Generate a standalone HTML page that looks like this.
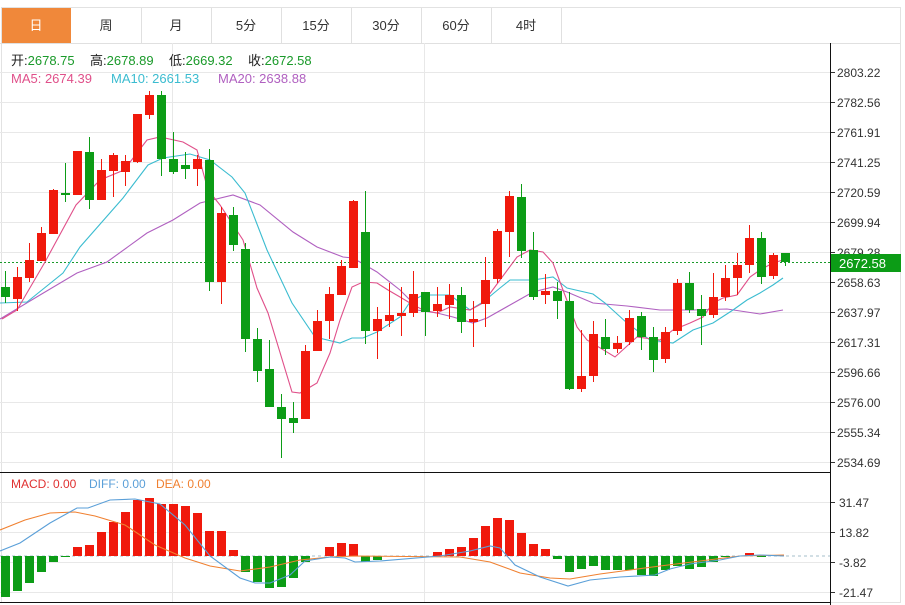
<!DOCTYPE html>
<html><head><meta charset="utf-8"><style>
html,body{margin:0;padding:0;background:#fff;width:905px;height:605px;overflow:hidden}
svg{display:block}
text{font-family:"Liberation Sans","Noto Sans CJK SC",sans-serif}
.r{fill:#f0190c}.g{fill:#0c9c16}
</style></head><body>
<svg width="905" height="605" xmlns="http://www.w3.org/2000/svg">
<!-- tabs -->
<rect x="1.5" y="7.5" width="899" height="595" fill="none" stroke="#e2e2e2"/>
<rect x="2" y="8" width="69" height="35" fill="#f0883a"/>
<g stroke="#e0e0e0">
<line x1="0" y1="43.5" x2="900" y2="43.5"/>
<line x1="141.5" y1="8" x2="141.5" y2="43"/><line x1="211.5" y1="8" x2="211.5" y2="43"/>
<line x1="281.5" y1="8" x2="281.5" y2="43"/><line x1="351.5" y1="8" x2="351.5" y2="43"/>
<line x1="421.5" y1="8" x2="421.5" y2="43"/><line x1="491.5" y1="8" x2="491.5" y2="43"/>
<line x1="561.5" y1="8" x2="561.5" y2="43"/>
</g>
<g font-size="13" fill="#333" text-anchor="middle">
<text x="36" y="30" fill="#fff">日</text><text x="106" y="30">周</text><text x="176" y="30">月</text>
<text x="246" y="30">5分</text><text x="316" y="30">15分</text><text x="386" y="30">30分</text>
<text x="456" y="30">60分</text><text x="526" y="30">4时</text>
</g>
<!-- grid -->
<g stroke="#e8e8e8">
<line x1="0" y1="72.5" x2="830" y2="72.5"/><line x1="0" y1="102.5" x2="830" y2="102.5"/>
<line x1="0" y1="132.5" x2="830" y2="132.5"/><line x1="0" y1="162.5" x2="830" y2="162.5"/>
<line x1="0" y1="192.5" x2="830" y2="192.5"/><line x1="0" y1="222.5" x2="830" y2="222.5"/>
<line x1="0" y1="252.5" x2="830" y2="252.5"/><line x1="0" y1="282.5" x2="830" y2="282.5"/>
<line x1="0" y1="312.5" x2="830" y2="312.5"/><line x1="0" y1="342.5" x2="830" y2="342.5"/>
<line x1="0" y1="372.5" x2="830" y2="372.5"/><line x1="0" y1="402.5" x2="830" y2="402.5"/>
<line x1="0" y1="432.5" x2="830" y2="432.5"/><line x1="0" y1="462.5" x2="830" y2="462.5"/>
<line x1="0" y1="502.5" x2="830" y2="502.5"/><line x1="0" y1="532.5" x2="830" y2="532.5"/>
<line x1="0" y1="562.5" x2="830" y2="562.5"/><line x1="0" y1="592.5" x2="830" y2="592.5"/>
<line x1="172.5" y1="43" x2="172.5" y2="602"/><line x1="424.5" y1="43" x2="424.5" y2="602"/>
</g>
<line x1="0" y1="472.5" x2="830" y2="472.5" stroke="#111"/>
<line x1="0" y1="602.5" x2="830" y2="602.5" stroke="#111"/>
<line x1="830.5" y1="43" x2="830.5" y2="605" stroke="#111"/>
<g stroke="#333">
<line x1="831" y1="72.5" x2="835" y2="72.5"/><line x1="831" y1="102.5" x2="835" y2="102.5"/>
<line x1="831" y1="132.5" x2="835" y2="132.5"/><line x1="831" y1="162.5" x2="835" y2="162.5"/>
<line x1="831" y1="192.5" x2="835" y2="192.5"/><line x1="831" y1="222.5" x2="835" y2="222.5"/>
<line x1="831" y1="252.5" x2="835" y2="252.5"/><line x1="831" y1="282.5" x2="835" y2="282.5"/>
<line x1="831" y1="312.5" x2="835" y2="312.5"/><line x1="831" y1="342.5" x2="835" y2="342.5"/>
<line x1="831" y1="372.5" x2="835" y2="372.5"/><line x1="831" y1="402.5" x2="835" y2="402.5"/>
<line x1="831" y1="432.5" x2="835" y2="432.5"/><line x1="831" y1="462.5" x2="835" y2="462.5"/>
<line x1="831" y1="502.5" x2="835" y2="502.5"/><line x1="831" y1="532.5" x2="835" y2="532.5"/>
<line x1="831" y1="562.5" x2="835" y2="562.5"/><line x1="831" y1="592.5" x2="835" y2="592.5"/>
</g>
<g font-size="12" fill="#333">
<text x="837" y="77">2803.22</text><text x="837" y="107">2782.56</text><text x="837" y="137">2761.91</text>
<text x="837" y="167">2741.25</text><text x="837" y="197">2720.59</text><text x="837" y="227">2699.94</text>
<text x="837" y="257">2679.28</text><text x="837" y="287">2658.63</text><text x="837" y="317">2637.97</text>
<text x="837" y="347">2617.31</text><text x="837" y="377">2596.66</text><text x="837" y="407">2576.00</text>
<text x="837" y="437">2555.34</text><text x="837" y="467">2534.69</text>
<text x="839" y="507">31.47</text><text x="839" y="537">13.82</text><text x="839" y="567">-3.82</text><text x="839" y="597">-21.47</text>
</g>
<!-- current price -->
<line x1="0" y1="262.5" x2="830" y2="262.5" stroke="#1a9a2a" stroke-dasharray="2,2"/>
<rect x="831" y="254" width="70" height="18" fill="#0c9c16"/>
<text x="839" y="268" font-size="13" fill="#fff">2672.58</text>
<!-- header text -->
<g font-size="13">
<text x="11" y="65" fill="#222">开:<tspan fill="#1a9a2a">2678.75</tspan></text>
<text x="90" y="65" fill="#222">高:<tspan fill="#1a9a2a">2678.89</tspan></text>
<text x="169" y="65" fill="#222">低:<tspan fill="#1a9a2a">2669.32</tspan></text>
<text x="248" y="65" fill="#222">收:<tspan fill="#1a9a2a">2672.58</tspan></text>
<text x="11" y="83" fill="#e0508a">MA5: 2674.39</text>
<text x="111" y="83" fill="#3bbcd0">MA10: 2661.53</text>
<text x="218" y="83" fill="#b060c0">MA20: 2638.88</text>
<text x="11" y="488" font-size="12" fill="#e03030">MACD: 0.00</text>
<text x="89" y="488" font-size="12" fill="#5a9fd8">DIFF: 0.00</text>
<text x="156" y="488" font-size="12" fill="#f08030">DEA: 0.00</text>
</g>
<!-- MA lines -->
<g fill="none" stroke-width="1.1">
<polyline stroke="#b060c0" points="0,319 40,295 77,273 107,262 147,233 173,220 200,203 233,195 260,205 293,232 317,247 343,257 353,258 377,272 400,290 410,300 417,310 437,313 453,317 473,323 487,318 510,305 533,292 553,287 567,292 593,303 627,306 660,310 693,310 727,309 760,314 783,310"/>
<polyline stroke="#3bbcd0" points="0,303 27,302 63,273 80,247 123,198 148,165 163,158 190,154 210,160 232,177 245,193 267,250 292,303 315,337 340,343 352,338 363,338 377,332 400,317 410,302 423,295 450,295 470,310 483,302 500,288 510,280 533,280 553,277 567,288 593,294 605,303 627,323 650,340 673,343 693,330 713,323 733,310 747,300 760,293 773,285 783,278"/>
<polyline stroke="#e0508a" points="2,319 17,310 45,262 76,205 100,180 124,170 147,140 160,137 183,142 197,150 208,190 220,205 243,240 257,288 268,313 292,392 300,393 317,383 330,353 340,320 352,287 363,282 377,283 388,290 400,297 410,303 423,310 437,313 450,307 470,310 483,303 500,280 517,257 530,250 543,252 553,263 563,290 577,327 587,340 615,357 637,337 660,340 673,330 690,323 703,317 713,303 723,298 737,295 750,277 760,270 773,263 783,260"/>
</g>
<!-- wicks -->
<path stroke="#f0190c" stroke-width="1" fill="none" d="M17.5 267V311M29.5 243V282M41.5 227V261M53.5 189V234M77.5 151V195M101.5 159V200M113.5 153V197M125.5 155V186M137.5 114V163M149.5 91V119M197.5 155V186M221.5 207V304M305.5 345V419M317.5 310V351M329.5 287V339M341.5 260V295M353.5 200V268M377.5 307V359M389.5 283V327M401.5 287V336M413.5 271V317M437.5 287V317M449.5 284V319M473.5 301V347M485.5 257V327M497.5 229V283M509.5 191V257M545.5 274V304M581.5 330V392M593.5 321V382M617.5 336V353M629.5 310V345M665.5 327V363M677.5 279V335M713.5 273V318M725.5 265V301M737.5 253V295M749.5 225V273M773.5 253V279"/>
<path stroke="#0c9c16" stroke-width="1" fill="none" d="M5.5 271V303M65.5 163V202M89.5 137V209M161.5 91V176M173.5 132V174M185.5 152V179M209.5 149V291M233.5 207V251M245.5 243V352M257.5 328V382M269.5 340V407M281.5 394V458M293.5 402V433M365.5 191V344M425.5 292V336M461.5 287V333M521.5 184V258M533.5 232V300M557.5 282V319M569.5 292V390M605.5 319V355M641.5 312V350M653.5 327V372M689.5 272V313M701.5 295V345M761.5 232V284M785.5 253V266"/>
<!-- bodies -->
<g class="r">
<rect x="13" y="277" width="9" height="22"/><rect x="25" y="260" width="9" height="18"/><rect x="37" y="233" width="9" height="28"/><rect x="49" y="190" width="9" height="44"/>
<rect x="73" y="151" width="9" height="44"/><rect x="97" y="170" width="9" height="30"/><rect x="109" y="155" width="9" height="16"/><rect x="121" y="161" width="9" height="11"/>
<rect x="133" y="114" width="9" height="48"/><rect x="145" y="95" width="9" height="20"/><rect x="193" y="159" width="9" height="10"/><rect x="217" y="213" width="9" height="69"/>
<rect x="301" y="351" width="9" height="68"/><rect x="313" y="321" width="9" height="30"/><rect x="325" y="294" width="9" height="27"/><rect x="337" y="266" width="9" height="29"/>
<rect x="349" y="201" width="9" height="67"/><rect x="373" y="319" width="9" height="12"/><rect x="385" y="315" width="9" height="6"/><rect x="397" y="313" width="9" height="3"/>
<rect x="409" y="294" width="9" height="19"/><rect x="433" y="304" width="9" height="7"/><rect x="445" y="295" width="9" height="10"/><rect x="469" y="319" width="9" height="3"/>
<rect x="481" y="280" width="9" height="24"/><rect x="493" y="231" width="9" height="48"/><rect x="505" y="196" width="9" height="36"/><rect x="541" y="291" width="9" height="4"/>
<rect x="577" y="376" width="9" height="13"/><rect x="589" y="334" width="9" height="42"/><rect x="613" y="343" width="9" height="6"/><rect x="625" y="318" width="9" height="24"/>
<rect x="661" y="332" width="9" height="27"/><rect x="673" y="283" width="9" height="48"/><rect x="709" y="297" width="9" height="18"/><rect x="721" y="278" width="9" height="19"/>
<rect x="733" y="265" width="9" height="13"/><rect x="745" y="238" width="9" height="27"/><rect x="769" y="255" width="9" height="21"/>
</g>
<g class="g">
<rect x="1" y="287" width="9" height="10"/><rect x="61" y="193" width="9" height="2"/><rect x="85" y="152" width="9" height="48"/><rect x="157" y="95" width="9" height="64"/>
<rect x="169" y="159" width="9" height="13"/><rect x="181" y="165" width="9" height="4"/><rect x="205" y="160" width="9" height="122"/><rect x="229" y="215" width="9" height="30"/>
<rect x="241" y="249" width="9" height="90"/><rect x="253" y="339" width="9" height="32"/><rect x="265" y="369" width="9" height="38"/><rect x="277" y="407" width="9" height="12"/>
<rect x="289" y="418" width="9" height="5"/><rect x="361" y="232" width="9" height="99"/><rect x="421" y="292" width="9" height="20"/><rect x="457" y="295" width="9" height="27"/>
<rect x="517" y="197" width="9" height="54"/><rect x="529" y="250" width="9" height="47"/><rect x="553" y="291" width="9" height="10"/><rect x="565" y="301" width="9" height="88"/>
<rect x="601" y="337" width="9" height="12"/><rect x="637" y="316" width="9" height="21"/><rect x="649" y="337" width="9" height="23"/><rect x="685" y="283" width="9" height="27"/>
<rect x="697" y="309" width="9" height="7"/><rect x="757" y="238" width="9" height="39"/><rect x="781" y="253" width="9" height="9"/>
</g>
<!-- MACD -->
<line x1="0" y1="556" x2="830" y2="556" stroke="#8ab" stroke-dasharray="3,3" stroke-width="0.8"/>
<g class="g">
<rect x="1" y="556" width="9" height="41"/><rect x="13" y="556" width="9" height="35"/><rect x="25" y="556" width="9" height="27"/><rect x="37" y="556" width="9" height="16"/>
<rect x="49" y="556" width="9" height="6"/><rect x="61" y="556" width="9" height="1"/>
<rect x="241" y="556" width="9" height="16"/><rect x="253" y="556" width="9" height="26"/><rect x="265" y="556" width="9" height="32"/><rect x="277" y="556" width="9" height="31"/>
<rect x="289" y="556" width="9" height="22"/><rect x="301" y="556" width="9" height="6"/><rect x="361" y="556" width="9" height="6"/><rect x="373" y="556" width="9" height="4"/>
<rect x="553" y="556" width="9" height="3"/><rect x="565" y="556" width="9" height="16"/><rect x="577" y="556" width="9" height="13"/><rect x="589" y="556" width="9" height="10"/>
<rect x="601" y="556" width="9" height="14"/><rect x="613" y="556" width="9" height="14"/><rect x="625" y="556" width="9" height="14"/><rect x="637" y="556" width="9" height="19"/>
<rect x="649" y="556" width="9" height="20"/><rect x="661" y="556" width="9" height="14"/><rect x="673" y="556" width="9" height="10"/><rect x="685" y="556" width="9" height="13"/>
<rect x="697" y="556" width="9" height="11"/><rect x="709" y="556" width="9" height="6"/><rect x="721" y="556" width="9" height="1"/><rect x="757" y="556" width="9" height="1"/>
</g>
<g class="r">
<rect x="73" y="547" width="9" height="9"/><rect x="85" y="545" width="9" height="11"/><rect x="97" y="532" width="9" height="24"/><rect x="109" y="522" width="9" height="34"/>
<rect x="121" y="512" width="9" height="44"/><rect x="133" y="500" width="9" height="56"/><rect x="145" y="498" width="9" height="58"/><rect x="157" y="504" width="9" height="52"/>
<rect x="169" y="504" width="9" height="52"/><rect x="181" y="506" width="9" height="50"/><rect x="193" y="513" width="9" height="43"/><rect x="205" y="531" width="9" height="25"/>
<rect x="217" y="531" width="9" height="25"/><rect x="229" y="550" width="9" height="6"/>
<rect x="325" y="547" width="9" height="9"/><rect x="337" y="543" width="9" height="13"/><rect x="349" y="544" width="9" height="12"/>
<rect x="433" y="552" width="9" height="4"/><rect x="445" y="549" width="9" height="7"/><rect x="457" y="547" width="9" height="9"/><rect x="469" y="538" width="9" height="18"/>
<rect x="481" y="526" width="9" height="30"/><rect x="493" y="518" width="9" height="38"/><rect x="505" y="520" width="9" height="36"/><rect x="517" y="533" width="9" height="23"/>
<rect x="529" y="544" width="9" height="12"/><rect x="541" y="549" width="9" height="7"/><rect x="745" y="553" width="9" height="3"/>
</g>
<g fill="none" stroke-width="1.1">
<polyline stroke="#f08030" points="0,530 25,520 50,513 75,512 95,516 125,525 155,545 185,558 210,566 240,571 270,567 300,560 330,557 355,556 460,557 490,562 520,573 550,578 570,579 600,574 630,570 660,566 700,561 740,556 784,555"/>
<polyline stroke="#5a9fd8" points="0,551 20,543 50,523 77,508 88,508 110,500 135,499 160,504 185,525 210,556 240,578 255,583 270,583 290,575 305,561 330,557 345,558 355,562 380,561 440,556 470,551 490,546 500,548 515,565 540,577 568,586 590,580 620,577 655,575 670,569 690,564 720,560 740,556 760,555 784,556"/>
</g>
</svg>
</body></html>
